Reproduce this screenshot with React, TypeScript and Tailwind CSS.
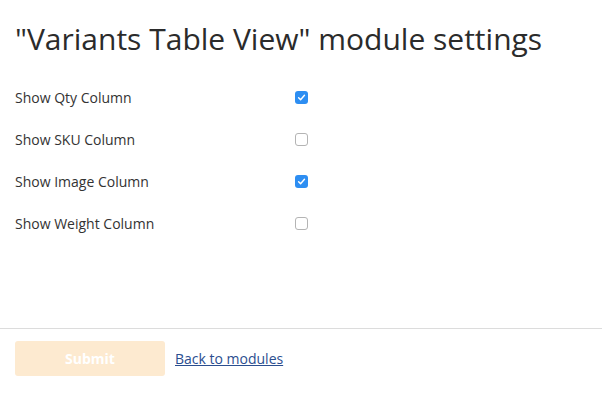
import React from 'react';

const rows = [
  { label: 'Show Qty Column', checked: true },
  { label: 'Show SKU Column', checked: false },
  { label: 'Show Image Column', checked: true },
  { label: 'Show Weight Column', checked: false },
];

function Box({ checked }: { checked: boolean }) {
  if (checked) {
    return (
      <span className="w-[13px] h-[13px] rounded-[3px] bg-[#2d8ef2] flex items-center justify-center">
        <svg width="9" height="9" viewBox="0 0 10 10">
          <path d="M1.8 5.2 L4 7.4 L8.3 2.6" fill="none" stroke="#fff" strokeWidth="1.6" strokeLinecap="round" strokeLinejoin="round" />
        </svg>
      </span>
    );
  }
  return <span className="w-[13px] h-[13px] rounded-[3px] border border-[#b4b4b4] bg-white" />;
}

export default function App() {
  return (
    <div className="w-[602px] h-[413px] bg-white text-[#333] flex flex-col" style={{ fontFamily: '"Open Sans", sans-serif' }}>
      <h1 className="text-[30px] leading-[40px] px-[15px] pt-[19px] text-[#2b2b2b]">
        "Variants Table View" module settings
      </h1>
      <div className="flex flex-col mt-[17px]">
        {rows.map((r) => (
          <div key={r.label} className="flex items-center h-[42px] px-[15px]">
            <span className="w-[280px] text-[14px] text-[#333]">{r.label}</span>
            <Box checked={r.checked} />
          </div>
        ))}
      </div>
      <div className="mt-auto border-t border-[#dcdcdc] px-[15px] pt-[12px] pb-[37px] flex items-center gap-[10px]">
        <button className="w-[150px] h-[35px] rounded-[3px] bg-[#fdead0] text-white font-bold text-[14px]">
          Submit
        </button>
        <a href="#" className="text-[14px] text-[#2b4e8f] underline">Back to modules</a>
      </div>
    </div>
  );
}
